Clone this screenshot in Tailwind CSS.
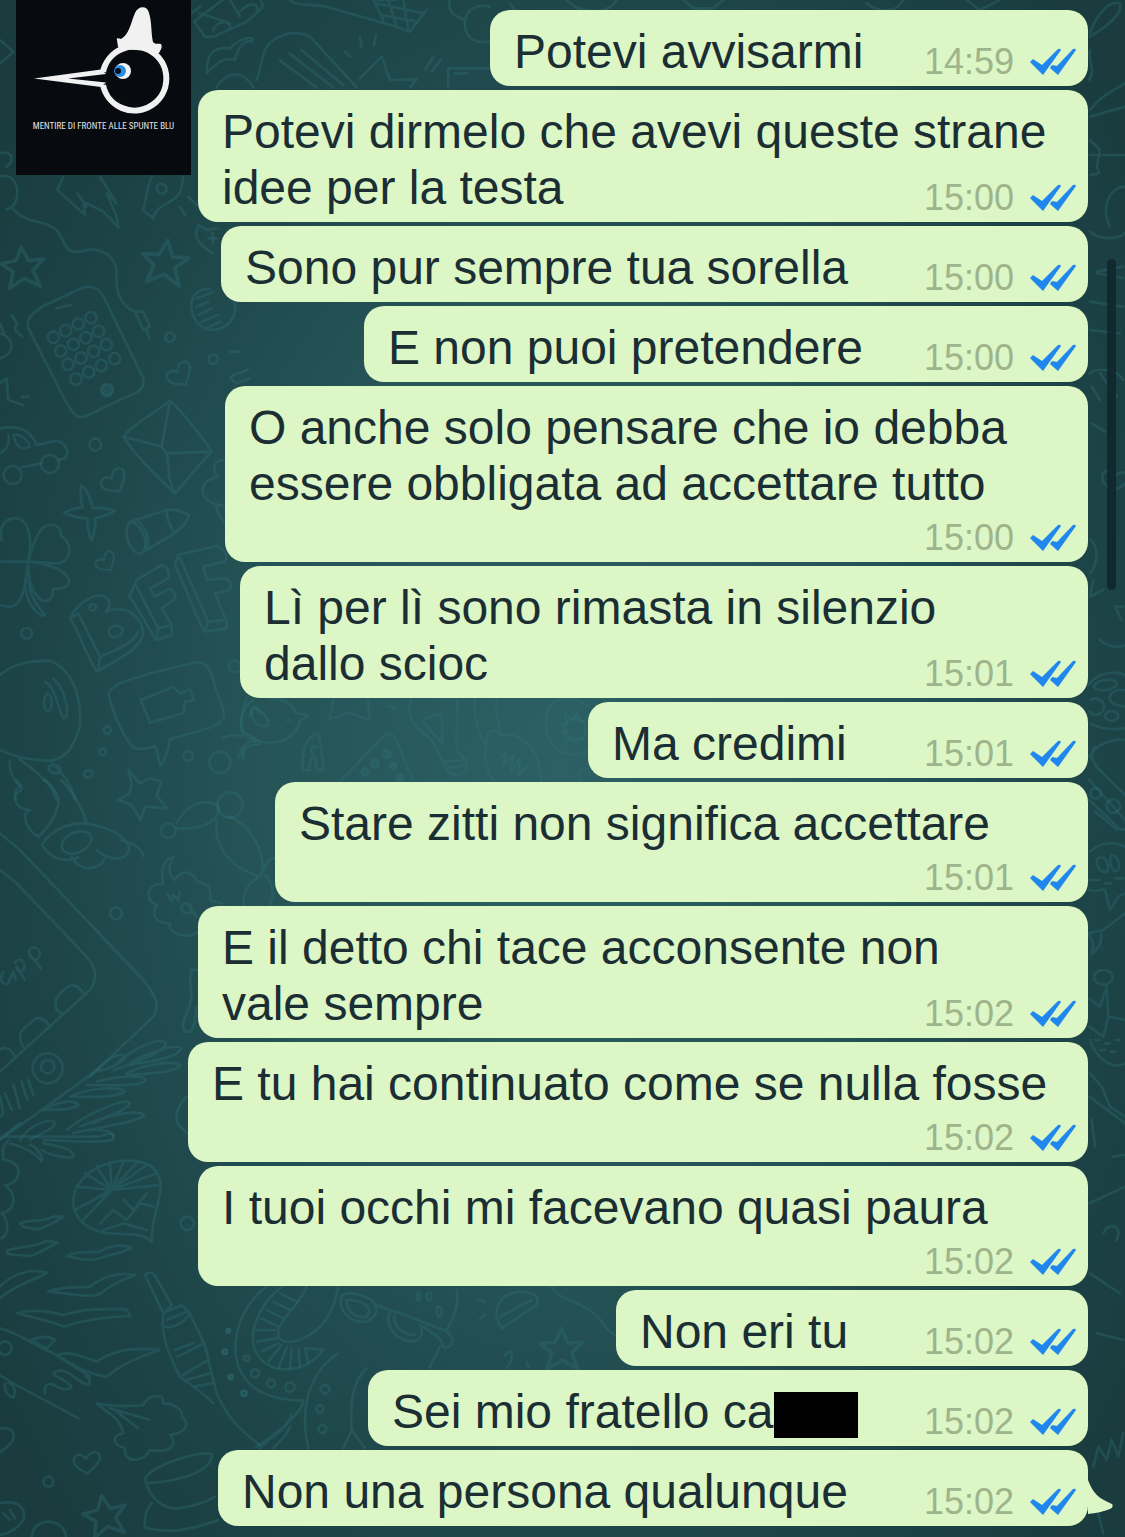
<!DOCTYPE html>
<html lang="it">
<head>
	<meta charset="UTF-8">
	<meta name="viewport" content="width=device-width, initial-scale=1">
	<script src="https://cdn.jsdelivr.net/npm/@tailwindcss/browser@4"></script>
	<title>Chat</title>
</head>
<body class="font-['Liberation_Sans',Arial,sans-serif] bg-[#1b3f43]">
	<main class="relative min-h-screen overflow-hidden bg-[radial-gradient(ellipse_62%_70%_at_50%_50%,#2c6064_0%,#255356_45%,#1c4346_80%,#1a3c3f_100%)]">

		<!-- doodle wallpaper -->
		<svg class="absolute inset-0 w-full h-full" viewBox="0 0 1125 1537" preserveAspectRatio="xMidYMid slice" fill="none" stroke="#2e7076" stroke-opacity=".36" stroke-width="8" stroke-linecap="round" stroke-linejoin="round" aria-hidden="true">
			<defs>
				<path id="star" d="M0-44 14-12 48-14 22 10 36 46 2 26-32 46-22 10-48-10-14-14Z"/>
				<path id="heart" d="M0 36C-20 24-44 12-40-8-36-24-16-26-4-8 6-30 34-38 38-14 40 6 14 20 0 36Z"/>
				<circle id="dot" r="14"/>
			</defs>
			<!-- top strip -->
			<g transform="scale(.3333)">
				<path d="M0 120 40 155 0 190M0 460C30 450 50 475 20 500M575 40 600 20"/>
				<path d="M582 65 680 -10 780-5 790 20 740 65 640 110 615 110ZM600 40 690 70 M690 0 720 50M640 95C640 70 680 55 690 80M720 35C740 10 780 5 770 30"/>
				<path d="M620 220C620 160 640 140 690 145 730 105 770 110 755 125 730 120 715 140 705 180 670 170 650 190 620 220Z"/>
				<path d="M650 262C680 210 730 210 760 262M770 240C790 190 780 130 840 110 870 95 900 95 930 110L1070 262M840 182 950 262M868 160 1000 262M904 150 1030 255"/>
				<path d="M870 0C890 20 930 10 980 20L1190 80 1230 95 1280 30M1190 0 1120 0 1150 60M1130 10 1270 40M1145 45 1250 65M1165 0 1190 80M1210 0 1225 90"/>
				<path d="M1080 110 1085 140M1128 105 1122 135M1035 155 1052 170M1080 235 1145 170 1170 240 1250 238 1230 262M1275 210 1300 172M1295 215 1322 180"/>
				<path d="M1350 0C1340 40 1370 50 1395 60M1395 60C1390 120 1430 130 1465 125M1395 60C1400 30 1430 10 1470 20M1345 262V205H1465M1365 220H1400"/>
				<path d="M1530 10 1570 60M1700 0C1750 50 1830 40 1850 0M2050 0 2080 25H2140L2170 0M2600 10C2640 40 2690 40 2710 0M2900 0 2940 30 3000 0"/>
			</g>
			<!-- phone, stars, envelope, car -->
			<g transform="translate(0 170) scale(.3333)">
				<path d="M0 20C60 0 70 110 20 118M40 118C90 170 120 140 170 180 200 220 190 250 240 245 300 225 350 260 350 310 345 380 370 410 405 425M405 425 430 425 450 470 430 480ZM440 480 448 505"/>
				<path d="M190 20 172 60 255 135 250 95 310 125 355 172 350 140 320 70 350 100 300 20M232 70 260 110"/>
				<path d="M455 20C430 80 440 110 428 120L460 145C465 100 540 100 545 50L550 20M470 50C475 35 500 40 500 60 490 80 470 70 470 50M540 110 555 135M565 80 590 105"/>
				<path d="M595 165 620 180 655 175M595 165C580 200 590 220 640 250M625 205H650M638 190V220"/>
				<use href="#star" transform="translate(68 290) rotate(-4) scale(1.35)"/>
				<use href="#star" transform="translate(495 275) rotate(8) scale(1.45)"/>
				<path d="M250 352C290 345 305 360 330 420L430 625C435 660 410 670 380 680L260 738C230 750 220 730 200 700L85 475C78 440 100 430 130 408ZM170 415 212 405"/>
				<g>
					<circle cx="160" cy="502" r="17"/><circle cx="197" cy="482" r="17"/><circle cx="235" cy="462" r="17"/><circle cx="273" cy="443" r="17"/>
					<circle cx="182" cy="543" r="17"/><circle cx="220" cy="523" r="17"/><circle cx="258" cy="503" r="17"/><circle cx="296" cy="484" r="17"/>
					<circle cx="204" cy="583" r="17"/><circle cx="243" cy="564" r="17"/><circle cx="281" cy="544" r="17"/><circle cx="319" cy="524" r="17"/>
					<circle cx="228" cy="627" r="17"/><circle cx="266" cy="606" r="17"/><circle cx="304" cy="587" r="17"/><circle cx="344" cy="566" r="17"/>
					<circle cx="321" cy="660" r="18" fill="#2e7076" fill-opacity=".3"/>
				</g>
				<path d="M630 357C560 350 555 450 620 478 690 490 730 420 690 370M590 385 640 365M590 410 625 395M595 435 635 415M605 455 655 435M620 475 660 455"/>
				<use href="#dot" x="510" y="502"/><use href="#dot" x="640" y="568"/>
				<path d="M690 545H715M690 625C710 600 730 615 745 595M690 625 710 640 750 625"/>
				<path d="M0 460 12 490M0 490C40 500 50 550 0 565M35 435 50 460 45 480 65 498M0 640 20 625 25 690 70 705M65 680H85"/>
				<use href="#heart" transform="translate(540 612) rotate(-28)"/>
				<use href="#heart" transform="translate(343 932) rotate(-28)"/>
				<path d="M370 800C400 760 480 720 510 692 540 720 600 790 635 845 600 880 560 930 525 970 480 930 400 850 370 800ZM370 800 485 830 510 692M485 830 500 850 635 845M500 850C510 890 500 930 525 970"/>
				<path d="M0 775C60 765 90 780 110 825L170 812C200 820 210 850 195 865L175 870M125 880 65 892M0 850C20 840 30 820 25 795M40 795C50 790 80 800 90 830 70 840 50 840 40 795"/>
				<circle cx="38" cy="915" r="27"/><circle cx="150" cy="882" r="27"/>
				<circle cx="286" cy="824" r="18"/>
				<path d="M675 870C630 870 640 910 655 920 600 930 590 980 640 1000L675 1010M650 1010C650 1040 670 1050 675 1060"/>
				<path d="M245 945C268 965 275 1000 278 1015 300 1012 330 1015 345 1022 320 1040 295 1040 285 1045 290 1070 282 1090 275 1110 262 1090 262 1060 262 1045 235 1045 205 1035 192 1028 215 1015 235 1015 248 1012 240 990 240 960 245 945Z"/>
			</g>
			<!-- clover, BFF, speech bubble, balloon -->
			<g transform="translate(0 500) scale(.3333)">
				<path d="M85 185C100 110 85 50 40 55 0 60 0 100 5 120M85 185C110 90 130 70 160 75 185 80 180 100 185 110 215 120 220 190 170 190L85 185ZM85 185C160 195 195 210 208 240 205 270 170 265 158 268 160 300 140 310 120 298 90 270 85 230 85 185M85 185H0M85 185C75 250 75 290 45 315 30 325 10 318 0 315M85 240C90 290 110 320 135 345M75 240C75 300 100 335 128 348"/>
				<path d="M390 65C370 90 380 150 420 162L510 108C540 90 560 70 568 45 550 35 520 25 500 30ZM390 65C420 70 450 120 430 155M410 60C440 80 450 120 440 148M500 30C500 60 510 80 525 100"/>
				<use href="#heart" transform="translate(318 185) scale(.8) rotate(-30)"/>
				<path d="M210 355C230 310 280 280 310 288 335 300 330 320 318 335 370 315 425 340 430 400 420 450 350 480 290 515 260 470 240 400 210 355ZM235 340 300 470C350 450 400 430 415 395M210 355 235 340M295 510 300 470M325 395C325 375 365 370 368 390 365 415 330 420 325 395"/>
				<circle cx="278" cy="322" r="10"/>
				<path d="M388 290 410 240 485 195C505 200 510 220 505 235L450 265 465 290 510 265C530 280 530 290 520 300L485 325 515 375V405L470 420C440 380 420 330 388 290ZM405 250 475 385 470 420M475 385 515 375"/>
				<path d="M525 195 535 165 650 138C680 150 685 170 675 185L610 200 620 240 675 235C695 245 695 260 690 270L645 280 680 365V385L615 395C590 360 570 290 525 195ZM540 175 625 365 615 395M625 365 680 360"/>
				<circle cx="80" cy="400" r="16"/>
				<path d="M0 525C40 490 90 482 150 482 220 510 245 590 240 680 220 750 190 780 150 782 80 780 40 770 0 750M132 605C135 570 155 575 155 610 155 640 132 640 132 605M135 545C170 565 170 620 190 655 210 660 205 580 160 535M30 780C25 810 40 840 60 860 40 870 45 890 45 900M60 780C120 820 160 860 170 900M150 782C200 830 220 870 225 900M145 800C170 790 185 800 180 815 165 825 150 820 145 800"/>
				<path d="M325 580C350 540 400 540 450 520L590 487C620 485 630 510 640 540 650 590 680 630 670 655 650 685 600 690 510 718 505 750 500 770 482 797 470 770 475 750 465 738 430 750 400 750 390 730 360 690 340 640 325 580ZM422 600 520 562 540 580 570 568 582 602 555 605 550 640 450 668Z"/>
				<circle cx="322" cy="690" r="11"/><circle cx="308" cy="756" r="10"/><circle cx="265" cy="822" r="12"/><circle cx="565" cy="768" r="14"/><circle cx="660" cy="787" r="32"/><circle cx="705" cy="500" r="18"/>
				<path d="M668 715C690 700 710 705 730 710 715 660 730 620 760 600M740 700C760 710 770 720 780 725M715 775C730 740 750 735 780 732M750 650C750 620 770 620 780 640"/>
			</g>
			<!-- bird, bulb, sunflower -->
			<g transform="translate(240 690) scale(.3333)">
				<path d="M20 25C0 80-10 120 30 145 90 170 160 160 180 95L205 75 170 70C150 30 110 25 90 25M35 55C50 40 90 90 85 105 60 120 30 90 35 55M0 180C20 160 30 150 45 155M10 210V180M140 90H150"/>
				<path d="M280 30 268 88 325 68 388 90 385 30M445 48 470 55"/>
				<path d="M188 240C185 180 200 135 235 130 245 170 245 200 252 238L232 242 225 200C215 195 210 210 208 240ZM215 190C210 165 225 160 232 175"/>
				<path d="M300 275 440 130 465 140 520 275"/>
				<g fill="#2e7076" fill-opacity=".3"><circle cx="405" cy="220" r="12"/><circle cx="440" cy="192" r="12"/><circle cx="375" cy="246" r="11"/><circle cx="460" cy="228" r="9"/><circle cx="480" cy="262" r="10"/></g>
				<path d="M515 25C495 80 520 110 570 145 600 180 600 210 615 225 620 260 660 260 675 245 690 220 675 205 655 190 640 140 660 90 650 25M548 95C560 80 600 70 605 75L608 160ZM615 215 680 210M620 235 678 225"/>
				<path d="M705 25C700 90 720 150 740 165M770 25C760 80 790 120 780 135M740 165C730 120 770 110 780 135 840 125 900 170 905 275M740 165C730 210 740 250 765 275M785 200 800 190 790 230 820 195 810 250 840 205 835 255 865 225"/>
				<path d="M935 40C900 90 920 180 980 190 1010 197 1030 190 1045 180M935 40C970 20 1020 25 1045 50M960 100 980 105 975 70 1000 90 1010 70 1020 95 1045 90M960 130 980 125M975 160 990 140 1010 165 1015 145 1045 155M1045 235C1010 235 1010 260 1025 275"/>
				<circle cx="1005" cy="118" r="32"/>
			</g>
			<!-- planet, balloon dog, notebook, leaves -->
			<g transform="translate(0 780) scale(.3333)">
				<path d="M50 0C60 20 80 20 50 40 40 70 60 90 90 90 60 100 80 150 115 170 160 130 180 80 175 50 160 20 140 0 130 0M185 0C220 40 250 90 260 130M125 195C160 140 220 125 270 132 330 145 380 170 388 205 380 245 330 245 290 210M125 195C150 235 190 250 235 232M185 200C190 150 270 140 275 175 270 220 190 240 185 200M215 230C240 280 300 270 315 235M360 180C400 190 420 200 430 228"/>
				<path d="M385 -30 395 10 390 40 355 60 395 75 422 122 435 80 500 85 470 45 485 5 450 -5 420 10Z"/>
				<circle cx="690" cy="75" r="38"/><circle cx="505" cy="152" r="22"/><circle cx="348" cy="400" r="18"/>
				<path d="M530 130C560 70 610 55 655 75 660 120 620 150 530 145M650 120C640 190 680 260 780 290 810 240 750 120 680 110M785 285C740 310 730 340 730 375M795 285C820 310 825 340 810 375M790 270C800 240 815 235 825 235"/>
				<path d="M520 230C490 240 480 270 490 310 440 310 430 360 470 375 450 410 470 430 510 430 500 460 560 480 595 455M520 230C500 270 510 290 525 300 540 270 580 270 590 305 630 310 635 330 630 360L665 370M500 340 515 365 520 345 535 360 540 335M560 370C540 370 540 395 560 400 580 400 580 375 560 370L590 410"/>
				<path d="M0 160 60 210 430 600C470 650 480 680 460 710L285 875 0 1080M0 270 50 310 260 530C295 570 290 600 270 630L0 875M250 640C240 620 220 610 205 620 170 645 160 660 170 690L185 700M150 740C130 710 110 705 90 730 60 750 50 770 70 800M45 830C30 800 10 800 0 810"/>
				<path d="M10 575C-5 600 10 620 25 610L40 575 48 600M45 550C50 530 80 540 72 565 65 580 50 575 50 560L75 600M85 515C95 490 125 505 118 530 110 545 90 540 88 520L122 565"/>
				<circle cx="143" cy="865" r="45"/><circle cx="143" cy="860" r="20"/>
				<path d="M0 950 10 1000 0 1010M15 940 35 990M40 915 60 985M65 905 82 960M85 900 100 945"/>
				<path d="M270 890C320 840 360 810 375 830 370 850 320 870 285 875M340 860C400 800 480 770 498 790 490 820 400 850 340 870M380 880C440 850 530 840 540 858 520 880 440 880 380 885M290 905C340 890 430 880 438 902 420 920 330 915 260 915M210 950C270 920 370 920 375 935 350 955 260 950 210 950M140 990C170 960 230 960 235 975 220 990 170 990 130 990M390 850C430 820 530 790 545 805 530 835 450 845 390 855"/>
				<path d="M200 1050C260 1000 380 950 390 970 370 1000 290 1020 240 1040M280 1030C330 1000 420 990 433 1005 420 1025 330 1035 270 1050M60 1080C90 1030 160 1010 165 1030 160 1050 120 1060 90 1080M220 1060C280 1040 340 1050 340 1070"/>
				<path d="M570 570 590 570M575 575C560 610 590 640 560 700 540 740 550 760 570 755 590 740 585 700 590 680M560 950C530 980 520 1020 540 1040L562 1060"/>
			</g>
			<!-- shell, feathers, syringe, tree -->
			<g transform="translate(0 1130) scale(.3333)">
				<path d="M0 20H300C340 0 350 20 335 30 290 42 180 30 130 30M30 40C70 50 110 70 125 95 130 80 115 55 90 45M130 40C190 50 225 60 220 82 180 85 140 70 125 60M25 30C0 60 10 70 10 90M10 90C70 90 70 160 15 165 50 190 50 240 5 250 25 270 30 310 5 325M0 25 60-20"/>
				<path d="M220 225C215 150 290 95 380 92 450 90 480 120 482 170 480 220 455 260 455 335 420 300 350 320 300 305 250 290 225 260 220 225ZM335 180 230 170M335 180 225 240M335 180 250 270M335 180 255 130M335 180 290 108M335 180 330 98M335 180 370 95M335 180 410 98M335 180 440 105M335 180 470 130M335 180 480 165M300 280 340 240 380 270 420 220 460 230M310 300 370 280 440 300M370 210 400 240 440 190"/>
				<path d="M60 280C100 265 120 280 160 260H190C160 280 130 295 110 298L70 290ZM20 362C70 345 100 355 140 332L172 338C140 355 110 375 90 378L22 372ZM200 378C240 360 270 370 300 365 330 345 360 342 395 352 370 370 330 372 300 385 270 395 230 385 200 378ZM145 485C200 465 240 475 270 470 310 440 350 425 405 435 370 450 330 465 310 485 280 510 220 490 145 485ZM52 550C100 535 150 545 190 555 250 535 320 535 380 538L392 558C320 560 250 570 190 590 150 570 100 565 52 550ZM0 470C40 430 90 415 140 428 110 450 50 460 0 505"/>
				<path d="M0 595C60 610 90 640 160 670L270 740M0 735C50 770 100 790 235 865M95 630C130 615 150 620 165 630L140 655ZM170 675C210 660 260 685 290 695 340 660 400 650 478 660 430 680 380 690 320 740 270 735 230 710 170 675ZM135 790C130 760 150 755 170 770 190 780 210 780 215 770 190 740 150 740 165 725 190 710 220 740 250 760 280 770 270 750 260 740M15 760C10 790 30 800 40 803 50 780 40 760 25 760"/>
				<circle cx="15" cy="655" r="20"/>
				<path d="M435 435C450 420 460 430 470 445L515 525 490 550ZM490 550 545 525 570 550C590 600 620 640 625 690L650 790C680 860 720 900 780 945M490 550C480 620 510 680 540 740 580 770 610 790 640 820M500 570 560 545M525 660 580 640M540 740 625 690M560 750 630 730M580 770 640 760M495 590C520 600 560 570 570 550M530 680C560 670 590 650 610 640"/>
				<path d="M290 820C330 830 390 830 430 825 440 800 470 795 485 800L490 820C530 820 550 845 545 860 570 880 560 910 510 915 540 950 500 970 450 960 430 1000 370 1000 375 955 330 940 340 915 370 910 360 860 320 850 290 820ZM330 835 450 870M350 845 415 895"/>
				<use href="#heart" transform="translate(262 995)"/>
				<use href="#star" transform="translate(315 1155) rotate(-10) scale(1.35)"/>
				<circle cx="145" cy="1055" r="15"/><circle cx="562" cy="280" r="20"/>
				<path d="M435 1050C440 1010 600 960 635 972 640 1010 580 1050 440 1060M435 1050C450 1100 480 1130 520 1135 570 1135 620 1115 645 1100M455 1120C430 1150 430 1190 440 1195 520 1215 600 1190 655 1170M0 1120C50 1110 80 1130 70 1170 60 1190 30 1210 0 1215M95 1221C100 1160 190 1160 198 1221M0 895C60 890 50 940 0 965M10 1150 30 1170M30 1140 45 1165"/>
				<circle cx="685" cy="602" r="5"/><circle cx="674" cy="666" r="6"/><circle cx="692" cy="740" r="6"/><circle cx="732" cy="790" r="8"/>
			</g>
			<!-- octopus arm, glasses, star -->
			<g transform="translate(190 1280) scale(.3333)">
				<path d="M230 20C150 80 120 180 145 260 180 340 250 360 340 362M350 20C340 60 270 120 265 150 260 190 290 190 330 180 400 150 430 100 445 20M275 20C200 80 170 170 200 220 240 290 350 280 400 210L350 205"/>
				<path d="M270 40 320 65M250 65 300 90M230 90 280 115M212 115 265 140M200 150H255M200 185 260 175M215 215 265 190M235 245 275 195M265 265 290 200M300 270 305 205M330 265 325 205M355 250 345 205"/>
				<path d="M455 45C440 90 480 130 530 125 560 110 570 90 545 60 510 40 480 35 455 45ZM470 60C470 100 500 115 530 110 550 90 530 60 470 60M560 75C590 85 600 95 620 95L760 150C790 165 800 195 765 205 750 190 760 175 735 165L700 140M600 95C580 140 620 180 665 185 700 180 700 150 690 135M615 105C605 140 640 165 675 165M800 30C810 90 780 130 770 150M750 200 718 265"/>
				<path d="M680 45C680 70 690 65 690 45 688 35 680 35 680 45M710 45C710 70 725 65 725 45 722 35 712 35 710 45M740 90C740 120 755 115 755 90 752 75 742 75 740 90M865 60 885 65M870 115 885 105M945 225C965 200 975 230 950 265M1010 245 1015 260"/>
				<path d="M935 145C900 90 930 40 990 35 1030 35 1050 50 1040 75ZM930 110 1025 60M1085 20C1110 60 1150 60 1190 85 1240 110 1240 150 1275 165"/>
				<use href="#star" transform="translate(1115 205) scale(1.35)"/>
				<g><circle cx="195" cy="280" r="12"/><circle cx="243" cy="310" r="12"/><circle cx="300" cy="322" r="14"/><circle cx="405" cy="328" r="13"/><circle cx="390" cy="387" r="11"/><circle cx="397" cy="447" r="12"/><circle cx="170" cy="235" r="8"/><circle cx="105" cy="215" r="7"/><circle cx="115" cy="152" r="5"/><circle cx="122" cy="293" r="6"/><circle cx="162" cy="340" r="7"/></g>
				<path d="M445 220C350 280 330 400 355 505M530 265C480 310 480 390 485 450L460 505M485 450 525 505M340 370C310 430 230 480 200 500M210 505C240 470 290 450 305 405M250 505C270 480 290 470 300 440"/>
			</g>
			<!-- right edge, upper half -->
			<g transform="translate(1080 0) scale(.3333)">
				<path d="M30 100C50 40 90 0 120 10 130 40 80 80 30 110M28 240C50 200 20 180 30 150M30 330C60 290 100 270 135 250M30 350 135 320M30 420 60 450 50 500C70 530 40 520 30 525M30 465H135M90 680C60 620 90 560 135 560"/>
				<path d="M30 695C60 720 110 720 135 700M50 815 130 800M50 820 130 835M30 905 130 920M30 990 120 1000M30 1120C60 1100 110 1110 130 1140M35 1160 60 1200M60 1120 110 1190M35 1270 75 1295M30 1620C60 1640 50 1700 30 1720M40 1740 30 1790 70 1770M130 1820 105 1820 125 1860"/>
				<use href="#heart" transform="translate(105 1440) rotate(15)"/>
			</g>
			<!-- right edge, lower half -->
			<g transform="translate(1080 640) scale(.3333)">
				<path d="M60 0C80 20 120 25 135 15M25 135C50 100 100 90 135 105M30 250C60 265 100 270 135 265M30 180C45 170 75 180 72 205 65 225 40 230 28 215M40 140C60 110 115 115 110 135 90 155 55 155 40 140M135 150C90 145 70 180 110 195L135 200"/>
				<ellipse cx="95" cy="228" rx="20" ry="15"/>
				<path d="M28 350C50 310 100 295 135 300M45 320C20 350 50 385 70 400L135 465M28 420 135 540M28 480 120 568H135M45 515 110 568"/>
				<circle cx="47" cy="460" r="16"/><circle cx="100" cy="498" r="20"/>
				<path d="M30 635C60 605 110 605 135 620M50 660C60 640 85 655 85 690 75 705 50 690 50 660M95 645C120 650 125 690 105 695 90 680 85 660 95 645M28 750C50 760 60 745 75 750L90 810 115 770 135 760M28 720H60M75 730H95M105 715H130"/>
				<path d="M135 820 70 870 25 880 40 910 35 945 60 915 65 880"/>
				<ellipse cx="70" cy="1012" rx="28" ry="22"/>
				<path d="M28 1075 60 1100 80 1040 85 1130 135 1140M85 1130 70 1190 28 1160M30 1200C50 1260 100 1290 135 1270M45 1200H60M75 1210H90M105 1200H120M60 1230H75M90 1235H105"/>
				<path d="M30 1300 65 1340 90 1400 135 1430M28 1370 135 1450M35 1440 45 1520M100 1550 135 1545M28 1690 135 1640M70 1780C90 1740 130 1760 110 1800M30 1900 120 1960M50 2080 130 2100M40 2480 55 2420 80 2460 95 2400 115 2450 130 2380M50 2600 70 2680"/>
			</g>
		</svg>

		<!-- watermark logo -->
		<figure class="absolute left-4 top-0 size-[175px] bg-[#070b0f] text-center">
			<svg class="w-full" viewBox="16 0 175 115" fill="none" aria-hidden="true">
				<path d="M103 72A32 32 0 1 1 103 85" stroke="#f1f1f1" stroke-width="6"/>
				<path d="M34 78.500 101 69.500 106 74 68 78.500 106 82.500 101 87Z" fill="#f1f1f1"/>
				<path d="M117 40C116 38 118 38 121 39 129 35 131 22 135 13 138 6 147 5 149 13 152 22 151 34 153 42 156 45 158 43 161 44 163 47 160 51 159 53L151 53C143 50 133 49 125 50L118 47Z" fill="#f1f1f1"/>
				<circle cx="123" cy="71" r="8" fill="#f4f4f4"/>
				<circle cx="120" cy="71" r="6" fill="#2a8de0"/>
				<circle cx="118" cy="71" r="3" fill="#071018"/>
			</svg>
			<figcaption class="-mx-4 text-[9px] leading-[22px] whitespace-nowrap text-[#e4e4e4] font-['Liberation_Sans_Narrow','Roboto_Condensed','Open_Sans_Condensed','Liberation_Sans',sans-serif]">MENTIRE DI FRONTE ALLE SPUNTE BLU</figcaption>
		</figure>

		<!-- scroll indicator -->
		<div class="absolute right-[9px] top-[259px] w-[9px] h-[331px] rounded-full bg-[#0f272b]/90"></div>

		<ol id="messages" class="relative flex flex-col items-end gap-1 pt-[10px] pb-[11px] pr-[37px] text-[48px] leading-[56px] text-[#1a2e33] whitespace-nowrap"></ol>
	</main>

	<template id="message">
		<li class="relative grid max-w-full rounded-[20px] bg-[#dcf6c5] pl-6 pr-3 pt-3.5 pb-1.5">
			<p class="col-start-1 row-start-1"></p>
			<div class="col-start-1 row-start-1 self-end justify-self-end flex items-center gap-4 text-[36px] leading-9 text-[#9db48c]">
				<time></time>
				<svg class="w-[46px] h-7" viewBox="0 0 46 28" fill="#1f87ee" role="img" aria-label="Letto">
					<path d="M0 14 3 11 12 17 28 1Q30 0 31 2L13 27Z"/>
					<path d="M20 20 22 17 27 18 43 1Q45 0 46 2L28 27Z"/>
				</svg>
			</div>
		</li>
	</template>

	<script>
		// w: bubble width in px, below: time sits on its own row
		const messages = [
			{ w: 598, time: "14:59", text: "Potevi avvisarmi" },
			{ w: 890, time: "15:00", text: "Potevi dirmelo che avevi queste strane<br>idee per la testa" },
			{ w: 867, time: "15:00", text: "Sono pur sempre tua sorella" },
			{ w: 724, time: "15:00", text: "E non puoi pretendere" },
			{ w: 863, time: "15:00", text: "O anche solo pensare che io debba<br>essere obbligata ad accettare tutto", below: true },
			{ w: 848, time: "15:01", text: "Lì per lì sono rimasta in silenzio<br>dallo scioc" },
			{ w: 500, time: "15:01", text: "Ma credimi" },
			{ w: 813, time: "15:01", text: "Stare zitti non significa accettare", below: true },
			{ w: 890, time: "15:02", text: "E il detto chi tace acconsente non<br>vale sempre" },
			{ w: 900, time: "15:02", text: "E tu hai continuato come se nulla fosse", below: true },
			{ w: 890, time: "15:02", text: "I tuoi occhi mi facevano quasi paura", below: true },
			{ w: 472, time: "15:02", text: "Non eri tu" },
			{ w: 720, time: "15:02", text: 'Sei mio fratello ca<span class="inline-block w-[84px] h-[46px] bg-black align-middle"></span>' },
			{ w: 870, time: "15:02", text: "Non una persona qualunque", tail: true }
		];

		const list = document.getElementById("messages");
		const template = document.getElementById("message");

		messages.forEach((m) => {
			const row = template.content.cloneNode(true);
			const bubble = row.querySelector("li");
			bubble.style.width = m.w + "px";
			row.querySelector("p").innerHTML = m.text;
			row.querySelector("time").textContent = m.time;
			if (m.below) row.querySelector("p").classList.add("pb-11");
			if (m.tail) {
				bubble.insertAdjacentHTML("beforeend", '<svg class="absolute left-full bottom-[9px] w-[25px] h-10" viewBox="0 0 25 40" fill="#dcf6c5" aria-hidden="true"><path d="M0 3C5 17 12 22 24 27Q26 30 22 32 12 36 0 37Z"/></svg>');
			}
			list.appendChild(row);
		});
	</script>
</body>
</html>
